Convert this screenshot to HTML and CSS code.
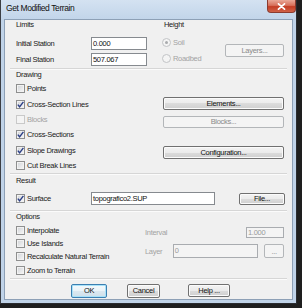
FILE: index.html
```html
<!DOCTYPE html>
<html>
<head>
<meta charset="utf-8">
<link rel="stylesheet" href="styles.css">
</head>
<body>
<div class="window">
  <div class="titlebar">
    <span class="title">Get Modified Terrain</span>
    <div class="close"><svg width="9" height="7" viewBox="0 0 9 7"><path d="M1.5 0.8 L7.5 6.2 M7.5 0.8 L1.5 6.2" stroke="#fff" stroke-width="1.7" stroke-linecap="round"/></svg></div>
  </div>
  <div class="client">
    <section class="sec-top">
      <div class="limits">
        <div class="hdr">Limits</div>
        <div class="field-row r1"><span class="lbl">Initial Station</span><span class="input w-station">0.000</span></div>
        <div class="field-row r2"><span class="lbl">Final Station</span><span class="input w-station">507.067</span></div>
      </div>
      <div class="height">
        <div class="hdr hdr-height">Height</div>
        <div class="height-body">
          <div class="radios">
            <div class="radio-row dis"><span class="radio on"></span>Soil</div>
            <div class="radio-row dis"><span class="radio"></span>Roadbed</div>
          </div>
          <button class="btn disabled w-layers">Layers...</button>
        </div>
      </div>
    </section>
    <div class="sep"></div>
    <section class="drawing">
      <div class="draw-left">
        <div class="hdr hdr-draw">Drawing</div>
        <div class="checks">
          <div class="chk-row"><span class="cb"></span>Points</div>
          <div class="chk-row"><span class="cb"><svg width="7" height="7" viewBox="0 0 7 7"><path d="M0.8 3.6 L2.6 5.8 L6.4 0.8" fill="none" stroke="#2c3f86" stroke-width="1.4"/></svg></span>Cross-Section Lines</div>
          <div class="chk-row dis"><span class="cb"></span>Blocks</div>
          <div class="chk-row"><span class="cb"><svg width="7" height="7" viewBox="0 0 7 7"><path d="M0.8 3.6 L2.6 5.8 L6.4 0.8" fill="none" stroke="#2c3f86" stroke-width="1.4"/></svg></span>Cross-Sections</div>
          <div class="chk-row"><span class="cb"><svg width="7" height="7" viewBox="0 0 7 7"><path d="M0.8 3.6 L2.6 5.8 L6.4 0.8" fill="none" stroke="#2c3f86" stroke-width="1.4"/></svg></span>Slope Drawings</div>
          <div class="chk-row"><span class="cb"></span>Cut Break Lines</div>
        </div>
      </div>
      <div class="draw-right">
        <button class="btn w-wide">Elements...</button>
        <button class="btn disabled w-wide b-blocks">Blocks...</button>
        <button class="btn w-wide b-config">Configuration...</button>
      </div>
    </section>
    <div class="sep"></div>
    <section class="result">
      <div class="hdr hdr-result">Result</div>
      <div class="surface-row">
        <span class="lbl chk-inline"><span class="cb"><svg width="7" height="7" viewBox="0 0 7 7"><path d="M0.8 3.6 L2.6 5.8 L6.4 0.8" fill="none" stroke="#2c3f86" stroke-width="1.4"/></svg></span>Surface</span>
        <span class="input w-surface">topografico2.SUP</span>
        <button class="btn w-file">File...</button>
      </div>
    </section>
    <div class="sep sep-result"></div>
    <section class="options">
      <div class="hdr hdr-opt">Options</div>
      <div class="opt-body">
        <div class="opt-left">
          <div class="chk-row"><span class="cb"></span>Interpolate</div>
          <div class="chk-row"><span class="cb"></span>Use Islands</div>
          <div class="chk-row"><span class="cb"></span>Recalculate Natural Terrain</div>
          <div class="chk-row"><span class="cb"></span>Zoom to Terrain</div>
        </div>
        <div class="opt-right">
          <div class="opt-row interval-row"><span class="dis">Interval</span><span class="input disabled w-interval">1.000</span></div>
          <div class="opt-row layer-row"><span class="dis w-laylbl">Layer</span><span class="input disabled w-layer">0</span><button class="btn disabled w-dots">...</button></div>
        </div>
      </div>
    </section>
    <div class="sep sep-bottom"></div>
    <div class="buttons">
      <button class="btn focus w-ok">OK</button>
      <button class="btn w-cancel">Cancel</button>
      <button class="btn w-help">Help ...</button>
    </div>
  </div>
</div>
</body>
</html>
```

FILE: styles.css
```css
* { box-sizing: border-box; }
html, body { margin: 0; padding: 0; }
body {
  width: 302px;
  height: 308px;
  overflow: hidden;
  background: #1e1e1e;
  font-family: "Liberation Sans", Arial, sans-serif;
  font-size: 7.5px;
  letter-spacing: -0.3px;
  color: #1a1a1a;
}
.window {
  width: 297px;
  height: 304px;
  background: #c0d3e8;
  border-left: 1px solid #3c3f44;
  border-right: 1px solid #2a2c30;
  border-bottom: 1px solid #2a2c30;
  display: flex;
  flex-direction: column;
}
.titlebar {
  height: 19px;
  display: flex;
  align-items: flex-start;
  background: linear-gradient(#d4e2f1, #c2d5ea);
}
.title {
  margin: 3px 0 0 5px;
  font-size: 8.5px;
  letter-spacing: -0.4px;
  line-height: 10px;
  color: #111;
}
.close {
  margin-left: auto;
  width: 29px;
  height: 13px;
  border: 1px solid #8b3b2f;
  border-top: none;
  border-radius: 0 0 4px 4px;
  background: linear-gradient(#e9a897 0%, #d7705b 45%, #c43d24 55%, #cf6248 100%);
  display: flex;
  align-items: center;
  justify-content: center;
}
.close svg { display: block; }
.client {
  margin: 0 3px 3px 3px;
  height: 281px;
  border: 1px solid #8da0b6;
  background: #f0f0f0;
  display: flex;
  flex-direction: column;
}
.hdr { line-height: 10px; height: 10px; }
.dis { color: #a3a3a3; }

/* inputs */
.input {
  display: block;
  height: 13px;
  border: 1px solid #868a8f;
  background: #fff;
  line-height: 11px;
  padding-left: 1px;
  color: #111;
  white-space: nowrap;
}
.input.disabled { background: #f4f4f4; border-color: #a9acb0; color: #9a9a9a; }
.w-station { width: 56px; }
.w-surface { width: 124px; }
.w-interval { width: 38px; height: 11px; line-height: 9px; margin-left: auto; }
.w-layer { width: 86px; height: 14px; line-height: 12px; }

/* buttons */
.btn {
  font: inherit;
  letter-spacing: inherit;
  color: #111;
  height: 13px;
  padding: 0;
  border: 1px solid #707070;
  border-radius: 2px;
  background: linear-gradient(#f3f3f3 0%, #ebebeb 50%, #dcdcdc 50%, #cfcfcf 100%);
  box-shadow: inset 0 0 0 1px #fbfbfb;
  line-height: 11px;
  text-align: center;
  display: block;
}
.btn.disabled {
  border-color: #b3b6b9;
  background: #f4f4f4;
  box-shadow: none;
  color: #8a8a8a;
}
.btn.focus {
  border-color: #3c7fb1;
  box-shadow: inset 0 0 0 1px #a8e2f9;
  background: linear-gradient(#f4f9fc 0%, #eaf3f8 50%, #dbe9f1 50%, #cfe0ea 100%);
}
.w-layers { width: 59px; }
.w-wide { width: 121px; margin-left: 1px; }
.b-blocks { margin-top: 6px; height: 12px; line-height: 10px; }
.b-config { margin-top: 18px; }
.w-file { width: 46px; height: 12px; line-height: 10px; margin-left: auto; }
.w-dots { width: 20px; height: 14px; margin-left: 6px; }
.w-ok { width: 36px; height: 14px; line-height: 12px; }
.w-cancel { width: 33px; height: 14px; line-height: 12px; margin-left: 20px; }
.w-help { width: 42px; height: 13px; margin-left: 28px; }

/* separators */
.sep {
  height: 2px;
  margin: 0 5px;
  border-top: 1px solid #d6d6d6;
  border-bottom: 1px solid #fbfbfb;
  flex: none;
}

/* top section */
.sec-top { height: 48px; display: flex; flex: none; }
.limits { width: 157px; padding-left: 11px; }
.field-row { display: flex; align-items: center; height: 13px; }
.r1 { margin-top: 7px; }
.r2 { margin-top: 3px; }
.lbl { width: 75px; flex: none; }
.height { flex: 1; }
.hdr-height { padding-left: 2px; }
.height-body { display: flex; align-items: center; margin-top: 6px; }
.radios { width: 63px; display: flex; flex-direction: column; gap: 3px; }
.radio-row { height: 13px; display: flex; align-items: center; }
.radio {
  width: 9px;
  height: 9px;
  border-radius: 50%;
  border: 1px solid #c2c4c6;
  background: #f4f4f4;
  margin-right: 2px;
  display: flex;
  align-items: center;
  justify-content: center;
}
.radio.on::after {
  content: "";
  width: 3px;
  height: 3px;
  border-radius: 50%;
  background: #a9abad;
}

/* checkboxes */
.cb {
  width: 9px;
  height: 9px;
  flex: none;
  border: 1px solid #8e8f8f;
  background: linear-gradient(135deg, #cfd2d6, #f8f8f8);
  box-shadow: inset 0 0 0 1px #f2f2f2;
  margin-right: 2px;
  display: flex;
  align-items: center;
  justify-content: center;
}
.cb svg { display: block; }
.chk-row { display: flex; align-items: center; white-space: nowrap; }
.chk-row.dis .cb { border-color: #c9c9c9; background: #f4f4f4; box-shadow: none; }
.chk-inline { display: flex; align-items: center; }

/* drawing */
.drawing { display: flex; height: 103px; flex: none; }
.draw-left { width: 157px; padding-left: 11px; }
.hdr-draw { height: 9px; line-height: 9px; }
.checks { margin-top: 2px; display: grid; grid-auto-rows: 15.35px; }
.draw-right { padding-top: 27px; }

/* result */
.result { padding-left: 11px; padding-right: 7px; flex: none; }
.hdr-result { height: 11px; line-height: 11px; }
.surface-row { display: flex; align-items: center; height: 13px; margin-top: 6px; }
.sep-result { margin-top: 5px; }

/* options */
.options { flex: none; }
.hdr-opt { padding-left: 11px; }
.opt-body { display: flex; margin-top: 2px; }
.opt-left { width: 140px; padding-left: 11px; display: grid; grid-auto-rows: 13.2px; }
.opt-right { width: 139px; padding-top: 3px; }
.opt-row { display: flex; align-items: center; }
.interval-row { height: 11px; }
.layer-row { height: 14px; margin-top: 6px; }
.w-laylbl { width: 28px; }
.sep-bottom { margin-top: 1px; }

/* bottom buttons */
.buttons { display: flex; align-items: flex-start; margin-top: 4px; padding-left: 66px; }
```
